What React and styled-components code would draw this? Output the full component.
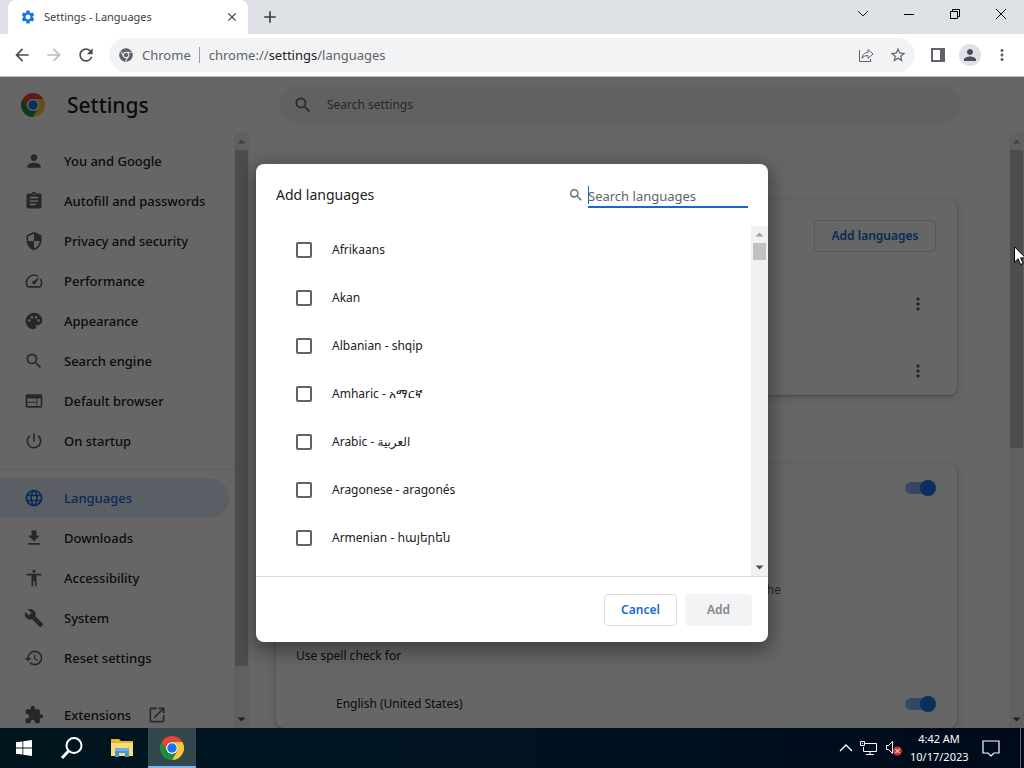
import React from "react";
import styled, { createGlobalStyle } from "styled-components";
import {
  MdAccessibility,
  MdAdd,
  MdArrowBack,
  MdArrowForward,
  MdAssignment,
  MdBuild,
  MdClose,
  MdExtension,
  MdFileDownload,
  MdLanguage,
  MdMoreVert,
  MdOpenInNew,
  MdPalette,
  MdPerson,
  MdPowerSettingsNew,
  MdRefresh,
  MdRestore,
  MdSearch,
  MdSecurity,
  MdSettings,
  MdSpeed,
  MdStarBorder,
  MdWeb,
} from "react-icons/md";
import { FaChrome } from "react-icons/fa";

const GlobalStyle = createGlobalStyle`
  *, *::before, *::after { box-sizing: border-box; }
  body {
    margin: 0;
    overflow: hidden;
    font-family: "Segoe UI", "Noto Sans", "DejaVu Sans", sans-serif;
    font-size: 12px;
    line-height: 20px;
    color: #202124;
  }
  button, input { font: inherit; color: inherit; }
  button { border: 0; padding: 0; background: none; }
  svg { display: block; flex: none; }
`;

const Desktop = styled.div`
  display: flex;
  flex-direction: column;
  height: 100vh;
`;

/* ---------- tab strip ---------- */

const TabStrip = styled.div`
  display: flex;
  height: 34px;
  padding-left: 8px;
  background: #dee1e6;
`;

const Tab = styled.div`
  display: flex;
  align-items: center;
  gap: 8px;
  width: 240px;
  padding: 0 8px 0 12px;
  border-radius: 8px 8px 0 0;
  background: #fff;
  font-size: 11px;
  color: #3c4043;
`;

const TabTitle = styled.span`
  flex: 1;
  white-space: nowrap;
`;

const IconButton = styled.button`
  display: flex;
  align-items: center;
  justify-content: center;
  width: ${(p) => p.$w || 32}px;
  height: ${(p) => p.$h || 32}px;
  color: ${(p) => p.$color || "#5f6368"};
`;

const WindowControls = styled.div`
  display: flex;
  margin-left: auto;
`;

/* ---------- toolbar ---------- */

const Toolbar = styled.div`
  display: flex;
  align-items: center;
  height: 43px;
  padding: 0 6px;
  background: #fff;
  border-bottom: 1px solid #b4b6b9;
`;

const Omnibox = styled.div`
  display: flex;
  align-items: center;
  flex: 1;
  height: 34px;
  margin: 0 7px;
  padding: 0 1px 0 10px;
  border-radius: 17px;
  background: #f1f3f4;
  font-size: 13px;
  color: #5f6368;
`;

const SiteName = styled.span`
  margin-left: 9px;
  padding-right: 8px;
  border-right: 1px solid #9aa0a6;
  line-height: 16px;
`;

const Address = styled.span`
  flex: 1;
  margin-left: 9px;
  white-space: nowrap;
  b { font-weight: 400; color: #202124; }
`;

const Avatar = styled.span`
  display: flex;
  align-items: center;
  justify-content: center;
  width: 22px;
  height: 22px;
  border-radius: 50%;
  background: #dee1e6;
  color: #4a4e5c;
`;

/* ---------- settings page ---------- */

const Page = styled.div`
  position: relative;
  display: flex;
  flex-direction: column;
  flex: 1;
  min-height: 0;
  overflow: hidden;
  background: #fff;
`;

const PageHeader = styled.header`
  display: flex;
  align-items: center;
  height: 56px;
  padding: 0 64px 0 21px;
`;

const PageTitle = styled.h1`
  width: 213px;
  margin: 0 0 0 22px;
  font-size: 21px;
  line-height: 28px;
  font-weight: 500;
`;

const SettingsSearch = styled.label`
  display: flex;
  align-items: center;
  flex: 1;
  gap: 14px;
  height: 40px;
  padding: 0 13px;
  border-radius: 20px;
  background: #f1f3f4;
  color: #5f6368;
  input {
    flex: 1;
    border: 0;
    padding: 0;
    background: none;
    outline: 0;
  }
  input::placeholder { color: #5f6368; opacity: 1; }
`;

const Columns = styled.div`
  display: flex;
  flex: 1;
  min-height: 0;
`;

const Sidebar = styled.aside`
  display: flex;
  width: 249px;
`;

const Menu = styled.nav`
  flex: 1;
  padding-top: 8px;
  overflow: hidden;
`;

const MenuItem = styled.a`
  display: flex;
  align-items: center;
  gap: ${(p) => (p.$external ? 17 : 20)}px;
  height: 40px;
  margin-right: 5px;
  padding-left: 24px;
  border-radius: 0 20px 20px 0;
  font-size: 13px;
  font-weight: 500;
  white-space: nowrap;
  text-decoration: none;
  color: ${(p) => (p.$selected ? "#1967d2" : "#202124")};
  background: ${(p) => (p.$selected ? "#e0edfd" : "none")};
  svg { color: ${(p) => (p.$selected ? "#1967d2" : "#5f6368")}; }
`;

const MenuLabel = styled.span`
  display: flex;
  align-items: center;
  gap: 16px;
`;

const MenuLine = styled.hr`
  height: 1px;
  margin: 8px 0;
  border: 0;
  background: ${(p) => (p.$clear ? "transparent" : "#e8eaed")};
`;

const Main = styled.main`
  flex: 1;
  padding: 66px 52px 0 27px;
  overflow: hidden;
`;

const Card = styled.section`
  margin-bottom: 69px;
  border-radius: 8px;
  background: #fff;
  box-shadow: 0 1px 2px rgba(60, 64, 67, 0.3), 0 2px 6px 2px rgba(60, 64, 67, 0.15);
`;

const CardRow = styled.div`
  display: flex;
  align-items: center;
  justify-content: ${(p) => (p.$end ? "flex-end" : "space-between")};
  height: ${(p) => p.$h || 48}px;
  margin-top: ${(p) => p.$gap || 0}px;
  padding: 0 21px 0 ${(p) => (p.$indent ? 60 : 20)}px;
`;

const Description = styled.p`
  width: 505px;
  margin: 0;
  padding: 68px 0 32px 60px;
  text-align: right;
  white-space: nowrap;
  color: #5f6368;
`;

const Switch = styled.input.attrs({ type: "checkbox", role: "switch" })`
  appearance: none;
  position: relative;
  width: 32px;
  height: 16px;
  margin: 0;
  &::before {
    content: "";
    position: absolute;
    inset: 2px 4px 2px 1px;
    border-radius: 6px;
    background: #8cb0f5;
  }
  &::after {
    content: "";
    position: absolute;
    right: 0;
    width: 16px;
    height: 16px;
    border-radius: 50%;
    background: #1a73e8;
  }
`;

const Button = styled.button`
  height: 32px;
  padding: 0 16px;
  border: 1px solid ${(p) => (p.disabled ? "#f1f3f4" : "#dadce0")};
  border-radius: 4px;
  background: ${(p) => (p.disabled ? "#f1f3f4" : "#fff")};
  font-weight: 600;
  color: ${(p) => (p.disabled ? "#80868b" : "#1967d2")};
  min-width: ${(p) => p.$min || 0}px;
`;

/* ---------- scroll bars ---------- */

const Track = styled.div`
  display: flex;
  flex-direction: column;
  align-items: center;
  flex: none;
  width: ${(p) => p.$w || 15}px;
  background: #f1f1f1;
`;

const Thumb = styled.div`
  width: 13px;
  height: ${(p) => p.$size};
  background: #c1c1c1;
`;

const Arrow = styled.svg.attrs({ viewBox: "0 0 17 17", width: 17, height: 17 })`
  fill: ${(p) => (p.$off ? "#a3a3a3" : "#505050")};
  margin-top: ${(p) => (p.$down ? "auto" : 0)};
`;

function ScrollBar({ size, width }) {
  return (
    <Track $w={width} aria-hidden="true">
      <Arrow $off><path d="M8.500 6.500 12.500 10.500h-8z" /></Arrow>
      <Thumb $size={size} />
      <Arrow $down><path d="M4.500 6.500h8l-4 4z" /></Arrow>
    </Track>
  );
}

/* ---------- dialog ---------- */

const Backdrop = styled.div`
  position: absolute;
  inset: 0;
  display: flex;
  align-items: center;
  justify-content: center;
  background: rgba(0, 0, 0, 0.6);
`;

const Dialog = styled.div`
  display: flex;
  flex-direction: column;
  width: 512px;
  border-radius: 8px;
  background: #fff;
  overflow: hidden;
  box-shadow: 0 6px 18px 4px rgba(0, 0, 0, 0.35);
`;

const DialogHeader = styled.div`
  display: flex;
  align-items: center;
  justify-content: space-between;
  height: 62px;
  padding: 0 20px;
`;

const DialogTitle = styled.h2`
  margin: 0;
  font-size: 14px;
  line-height: 24px;
  font-weight: 400;
`;

const LanguageSearch = styled.label`
  position: relative;
  display: flex;
  align-items: center;
  gap: 4px;
  font-size: 13px;
  color: #5f6368;
  input {
    width: 160px;
    height: 26px;
    padding: 4px 0 0;
    border: 0;
    border-bottom: 2px solid #1967d2;
    outline: 0;
    background: none;
  }
  input::placeholder { color: #5f6368; opacity: 1; }
`;

const Caret = styled.span`
  position: absolute;
  left: 20px;
  top: 4px;
  width: 1px;
  height: 18px;
  background: #1967d2;
`;

const ListArea = styled.div`
  display: flex;
  height: 350px;
`;

const LanguageList = styled.div`
  flex: 1;
  overflow: hidden;
`;

const LanguageRow = styled.label`
  display: flex;
  align-items: center;
  gap: 20px;
  height: 48px;
  padding-left: 40px;
`;

const CheckBox = styled.input.attrs({ type: "checkbox" })`
  appearance: none;
  width: 16px;
  height: 16px;
  margin: 0;
  border: 2px solid #5f6368;
  border-radius: 2px;
`;

const DialogFooter = styled.div`
  display: flex;
  align-items: center;
  justify-content: flex-end;
  gap: 8px;
  height: 66px;
  padding: 2px 16px 0;
  border-top: 1px solid #dadce0;
`;

const Pointer = styled.svg`
  position: absolute;
  right: -2px;
  top: 169px;
`;

/* ---------- taskbar ---------- */

const Taskbar = styled.footer`
  display: flex;
  height: 40px;
  background: linear-gradient(90deg, #00161f, #00131f 50%, #000a1a);
  color: #fff;
`;

const TaskButton = styled.button`
  display: flex;
  align-items: center;
  justify-content: center;
  width: ${(p) => p.$w || 48}px;
  height: 40px;
  background: ${(p) => (p.$active ? "#33474f" : "none")};
  border-bottom: ${(p) => (p.$active ? "2px solid #76b9ed" : "0")};
  padding-top: ${(p) => (p.$active ? "2px" : "0")};
`;

const Tray = styled.div`
  display: flex;
  align-items: center;
  gap: 7px;
  margin-left: auto;
  padding-right: 13px;
  border-right: 1px solid #5d6a7a;
  margin-right: 3px;
`;

const Clock = styled.div`
  width: 58px;
  font-size: 11px;
  line-height: 18px;
  text-align: center;
  white-space: nowrap;
`;

/* ---------- drawings ---------- */

function ChromeLogo({ size }) {
  return (
    <svg width={size} height={size} viewBox="0 0 48 48">
      <circle cx="24" cy="24" r="12" fill="#fff" />
      <path fill="#ea4335" d="M24,12H44.7812a23.9939,23.9939,0,0,0-41.5639.0029L13.6079,30l.0093-.0024A11.9852,11.9852,0,0,1,24,12Z" />
      <path fill="#fcc934" d="M34.3913,30.0029,24.0007,48A23.994,23.994,0,0,0,44.78,12.0031H23.9989l-.0025.0093A11.985,11.985,0,0,1,34.3913,30.0029Z" />
      <path fill="#1e8e3e" d="M13.6086,30.0031,3.218,12.006A23.994,23.994,0,0,0,24.0025,48L34.3931,30.0029l-.0067-.0068a11.9852,11.9852,0,0,1-20.7778.007Z" />
      <circle cx="24" cy="24" r="9.5" fill="#1a73e8" />
    </svg>
  );
}

const Line = ({ w, h, width = 1, children }) => (
  <svg width={w} height={h} viewBox={`0 0 ${w} ${h}`} fill="none" stroke="currentColor" strokeWidth={width}>
    {children}
  </svg>
);

const menuTop = [
  ["You and Google", MdPerson],
  ["Autofill and passwords", MdAssignment],
  ["Privacy and security", MdSecurity],
  ["Performance", MdSpeed],
  ["Appearance", MdPalette],
  ["Search engine", MdSearch],
  ["Default browser", MdWeb],
  ["On startup", MdPowerSettingsNew],
];

const menuBottom = [
  ["Languages", MdLanguage],
  ["Downloads", MdFileDownload],
  ["Accessibility", MdAccessibility],
  ["System", MdBuild],
  ["Reset settings", MdRestore],
];

const languages = [
  "Afrikaans",
  "Akan",
  "Albanian - shqip",
  "Amharic - አማርኛ",
  "Arabic - العربية",
  "Aragonese - aragonés",
  "Armenian - հայերեն",
];

function MenuGroup({ items }) {
  return items.map(([label, Icon]) => (
    <MenuItem key={label} href="#" $selected={label === "Languages"}>
      <Icon size={20} />
      {label}
    </MenuItem>
  ));
}

function AddLanguagesDialog() {
  return (
    <Dialog role="dialog" aria-labelledby="dialog-title">
      <DialogHeader>
        <DialogTitle id="dialog-title">Add languages</DialogTitle>
        <LanguageSearch>
          <MdSearch size={16} />
          <input type="text" placeholder="Search languages" aria-label="Search languages" />
          <Caret />
        </LanguageSearch>
      </DialogHeader>
      <ListArea>
        <LanguageList>
          {languages.map((name) => (
            <LanguageRow key={name}>
              <CheckBox />
              {name}
            </LanguageRow>
          ))}
        </LanguageList>
        <ScrollBar size="17px" width={17} />
      </ListArea>
      <DialogFooter>
        <Button $min={73}>Cancel</Button>
        <Button $min={67} disabled>Add</Button>
      </DialogFooter>
    </Dialog>
  );
}

export default function App() {
  return (
    <Desktop>
      <GlobalStyle />
      <TabStrip>
        <Tab>
          <MdSettings size={16} color="#1a73e8" />
          <TabTitle>Settings - Languages</TabTitle>
          <IconButton $w={16} $h={16} $color="#3c4043" aria-label="Close tab"><MdClose size={14} /></IconButton>
        </Tab>
        <IconButton $w={44} $h={34} $color="#3c4043" aria-label="New tab"><MdAdd size={20} /></IconButton>
        <WindowControls>
          <IconButton $w={46} $h={28} $color="#202124" aria-label="Search tabs">
            <Line w={12} h={8}><path d="M1 1l5 5 5-5" /></Line>
          </IconButton>
          <IconButton $w={46} $h={28} $color="#000" aria-label="Minimize">
            <Line w={10} h={3}><path d="M0 1.500h10" /></Line>
          </IconButton>
          <IconButton $w={46} $h={28} $color="#000" aria-label="Restore">
            <Line w={10} h={10}><path d="M.5 2.500h7v7h-7zM2.500 2.500v-2h7v7h-2" /></Line>
          </IconButton>
          <IconButton $w={46} $h={28} $color="#000" aria-label="Close">
            <Line w={10} h={10}><path d="M0 0l10 10M10 0L0 10" /></Line>
          </IconButton>
        </WindowControls>
      </TabStrip>

      <Toolbar>
        <IconButton aria-label="Back"><MdArrowBack size={20} color="#4a4d51" /></IconButton>
        <IconButton aria-label="Forward" $color="#babcbe"><MdArrowForward size={20} /></IconButton>
        <IconButton aria-label="Reload"><MdRefresh size={20} color="#4a4d51" /></IconButton>
        <Omnibox>
          <FaChrome size={14} />
          <SiteName>Chrome</SiteName>
          <Address>chrome://<b>settings</b>/languages</Address>
          <IconButton aria-label="Share">
            <Line w={16} h={16}>
              <path d="M1.500 3v11.500h11V12M4 11.500c.5-4 2.500-6 6-6V2.500l5 4.500-5 4.500v-3c-3 0-4.800 1-6 3z" />
            </Line>
          </IconButton>
          <IconButton aria-label="Bookmark"><MdStarBorder size={18} /></IconButton>
        </Omnibox>
        <IconButton aria-label="Side panel">
          <Line w={14} h={14} width={2}><path d="M1 1h12v12H1zM10 1v12M11.500 1v12" /></Line>
        </IconButton>
        <IconButton aria-label="Profile"><Avatar><MdPerson size={18} /></Avatar></IconButton>
        <IconButton aria-label="Menu"><MdMoreVert size={18} /></IconButton>
      </Toolbar>

      <Page>
        <PageHeader>
          <ChromeLogo size={24} />
          <PageTitle>Settings</PageTitle>
          <SettingsSearch>
            <MdSearch size={20} />
            <input type="text" placeholder="Search settings" aria-label="Search settings" />
          </SettingsSearch>
        </PageHeader>
        <Columns>
          <Sidebar>
            <Menu>
              <MenuGroup items={menuTop} />
              <MenuLine />
              <MenuGroup items={menuBottom} />
              <MenuLine $clear />
              <MenuItem href="#">
                <MdExtension size={20} />
                <MenuLabel>
                  Extensions
                  <MdOpenInNew size={20} />
                </MenuLabel>
              </MenuItem>
            </Menu>
            <ScrollBar size="516px" />
          </Sidebar>
          <Main>
            <Card>
              <CardRow $end $h={74}><Button $min={122}>Add languages</Button></CardRow>
              <CardRow $end $h={62}><IconButton $w={36} aria-label="More actions"><MdMoreVert size={20} /></IconButton></CardRow>
              <CardRow $end $gap={12}><IconButton $w={36} aria-label="More actions"><MdMoreVert size={20} /></IconButton></CardRow>
            </Card>
            <Card>
              <CardRow $end><Switch defaultChecked aria-label="Spell check" /></CardRow>
              <Description>the</Description>
              <CardRow>Use spell check for</CardRow>
              <CardRow as="label" $indent>
                English (United States)
                <Switch defaultChecked />
              </CardRow>
            </Card>
          </Main>
          <ScrollBar size="298px" />
        </Columns>
        <Backdrop>
          <AddLanguagesDialog />
        </Backdrop>
        <Pointer width="12" height="20" viewBox="0 0 12 20" aria-hidden="true">
          <path d="M.5.8v15.400l3.600-3.400 2.500 5.800 2.500-1.100-2.500-5.600h5z" fill="#fff" stroke="#000" />
        </Pointer>
      </Page>

      <Taskbar>
        <TaskButton aria-label="Start">
          <svg width="16" height="16" viewBox="0 0 16 16" fill="#fff">
            <path d="M0 2.300l6.500-.9v6.200H0zM7.300 1.300L16 0v7.600H7.300zM0 8.400h6.500v6.200L0 13.700zM7.300 8.400H16V16l-8.700-1.200z" />
          </svg>
        </TaskButton>
        <TaskButton aria-label="Search">
          <Line w={24} h={24} width={2}><circle cx="14" cy="9.500" r="7.500" /><path d="M8.500 15L2 22" strokeWidth="3" /></Line>
        </TaskButton>
        <TaskButton $w={52} aria-label="File Explorer">
          <svg width="22" height="18" viewBox="0 0 22 18">
            <path d="M0 0h8l2 2h12v15H0z" fill="#e9b436" />
            <path d="M0 4h22v13H0z" fill="#fbdc72" />
            <path d="M4 9h14v9h-4v-4H8v4H4z" fill="#4595cf" />
            <path d="M4 9h14v3H4z" fill="#63b4e4" />
          </svg>
        </TaskButton>
        <TaskButton $active aria-label="Chrome"><ChromeLogo size={24} /></TaskButton>
        <Tray>
          <Line w={14} h={8}><path d="M1 7l6-6 6 6" strokeWidth="1.400" /></Line>
          <Line w={18} h={16}>
            <path d="M5 3.500h11.500v8H3.500V7M10 11.500v3M6 14.500h8M.5 1.500h4v4h-4zM2.500 3v1" />
          </Line>
          <svg width="18" height="16" viewBox="0 0 18 16" fill="none">
            <path d="M1.500 5.500h2l4-4v12l-4-4h-2z" stroke="#fff" />
            <circle cx="12.500" cy="11" r="4.500" fill="#d13438" />
            <path d="M10.500 9l4 4M14.500 9l-4 4" stroke="#fff" />
          </svg>
          <Clock>4:42 AM<br />10/17/2023</Clock>
          <IconButton $color="#fff" aria-label="Notifications">
            <Line w={18} h={17}><path d="M1 1h16v12h-5l-3 3-3-3H1z" strokeWidth="1.200" /></Line>
          </IconButton>
        </Tray>
      </Taskbar>
    </Desktop>
  );
}
